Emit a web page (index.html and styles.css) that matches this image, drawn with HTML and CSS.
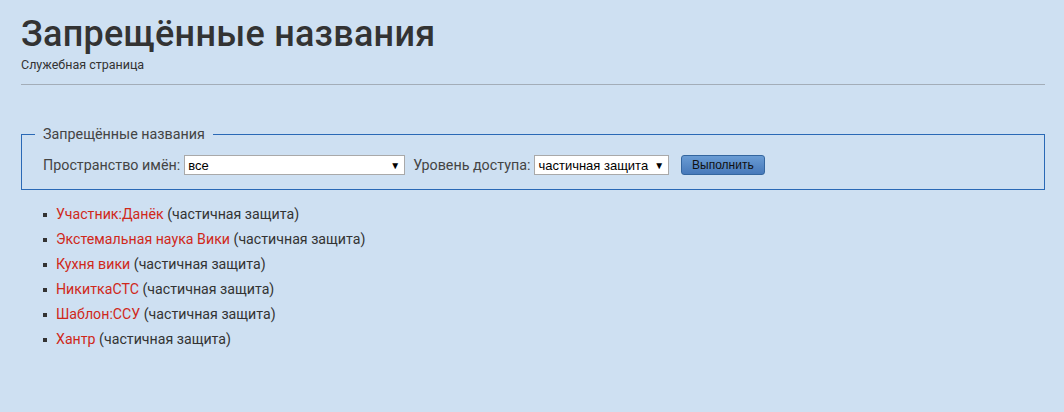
FILE: index.html
```html
<!DOCTYPE html>
<html lang="ru">
<head>
    <meta charset="UTF-8">
    <title>Запрещённые названия</title>
    <link rel="stylesheet" href="styles.css">
</head>
<body>
    <div class="content">
        <h1 class="page-title">Запрещённые названия</h1>
        <div class="subtitle">Служебная страница</div>
        <hr class="divider">
        <form class="filter">
            <fieldset>
                <legend>Запрещённые названия</legend>
                <label for="ns">Пространство имён:</label>
                <span class="select wide"><span>все</span><span class="arrow">▼</span></span>
                <label for="level">Уровень доступа:</label>
                <span class="select"><span>частичная защита</span><span class="arrow">▼</span></span>
                <button type="button" class="btn">Выполнить</button>
            </fieldset>
        </form>
        <ul class="titles">
            <li><a href="#">Участник:Данёк</a> (частичная защита)</li>
            <li><a href="#">Экстемальная наука Вики</a> (частичная защита)</li>
            <li><a href="#">Кухня вики</a> (частичная защита)</li>
            <li><a href="#">НикиткаСТС</a> (частичная защита)</li>
            <li><a href="#">Шаблон:ССУ</a> (частичная защита)</li>
            <li><a href="#">Хантр</a> (частичная защита)</li>
        </ul>
    </div>
</body>
</html>
```

FILE: styles.css
```css
body {
    margin: 0;
    background: #cee0f2;
    color: #333;
    font-family: Roboto, "Liberation Sans", sans-serif;
}
.content {
    padding: 8px 19px 0 21px;
}
.page-title {
    margin: 0;
    font-size: 36px;
    font-weight: 500;
    letter-spacing: 0.25px;
    line-height: 52px;
    color: #333;
}
.subtitle {
    font-size: 12.5px;
    line-height: 14px;
    margin-top: -2px;
}
.divider {
    border: 0;
    border-top: 1px solid #a3adb8;
    margin: 12px 0 0;
}
.filter fieldset {
    margin: 41px 0 0;
    padding: 13px 21px 14px;
    border: 1px solid #2a69b6;
    display: flex;
    align-items: center;
    font-size: 14.3px;
    color: #444;
}
.filter legend {
    padding: 0 8px;
    margin-left: -8px;
    color: #444;
}
.filter label {
    margin-right: 4px;
}
.select {
    display: inline-flex;
    justify-content: space-between;
    align-items: center;
    box-sizing: border-box;
    height: 20px;
    padding: 0 4px 0 3px;
    background: #fff;
    border: 1px solid #a9a9a9;
    font-family: "Liberation Sans", Arial, sans-serif;
    font-size: 13px;
    color: #000;
    margin-right: 8px;
}
.select .arrow {
    font-size: 10px;
    margin-left: 6px;
}
.select.wide {
    width: 221px;
}
.btn {
    margin-left: 4px;
    height: 20px;
    padding: 0 10px;
    border: 1px solid #34669f;
    border-radius: 3px;
    background: linear-gradient(#6a9cd4, #4779ba);
    font-family: "Liberation Sans", Arial, sans-serif;
    font-size: 12px;
    color: #111;
}
.titles {
    margin: 12px 0 0;
    padding-left: 35px;
    list-style: none;
    font-size: 14.2px;
    line-height: 25px;
}
.titles li::before {
    content: "";
    display: inline-block;
    width: 4px;
    height: 4px;
    background: #333;
    margin-left: -13px;
    margin-right: 9px;
    vertical-align: middle;
}
.titles a {
    color: #d0281a;
    text-decoration: none;
}
```
